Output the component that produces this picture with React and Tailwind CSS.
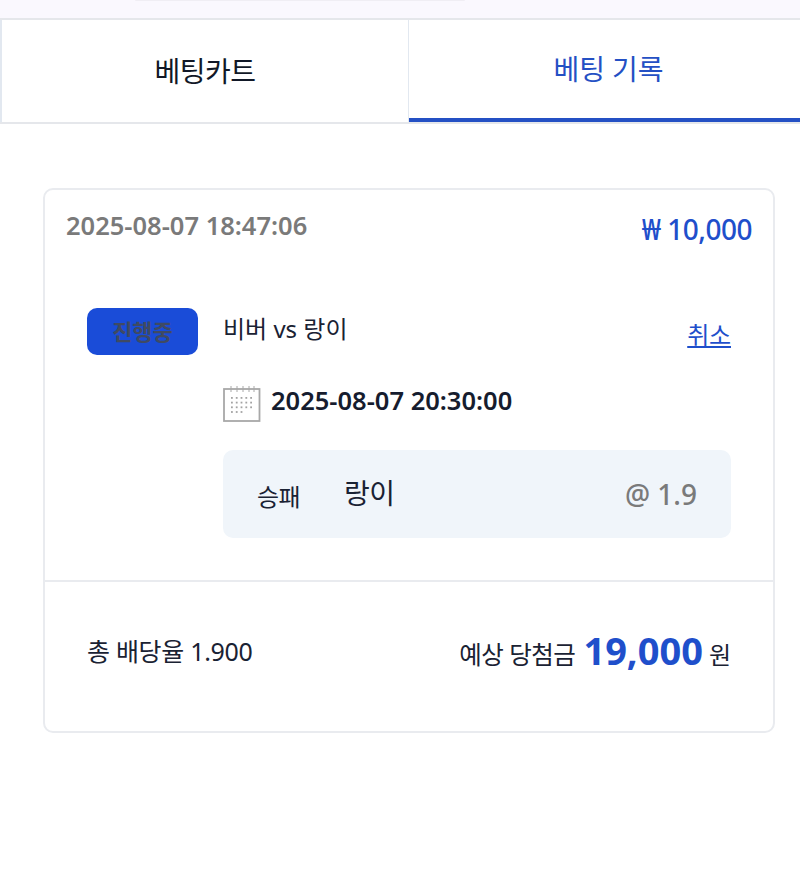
import React from 'react';

const font = { fontFamily: '"Noto Sans", "Noto Sans CJK KR", sans-serif' };

function CalendarIcon() {
  const dots = [];
  for (let r = 0; r < 4; r++) {
    for (let c = 0; c < 5; c++) {
      if (r === 3 && c > 2) continue;
      dots.push(<rect key={`${r}-${c}`} x={8 + c * 4.8} y={13 + r * 4.7} width="1.8" height="1.8" fill="#a3a3a3" />);
    }
  }
  return (
    <svg width="38" height="38" viewBox="0 0 38 38" fill="none" className="shrink-0 mt-[5px]">
      <rect x="1" y="5" width="35.5" height="32" stroke="#a8a8a8" strokeWidth="1.8" />
      <path d="M8 2V8M14 2V8M20 2V8M26 2V8M31 2V8" stroke="#a8a8a8" strokeWidth="1" />
      {dots}
    </svg>
  );
}

export default function App() {
  return (
    <div style={font} className="w-[800px] h-[887px] bg-white overflow-hidden text-[#111827]">
      <div className="h-[18px] bg-[#faf8fe] flex justify-center">
        <div className="w-[330px] h-[1px] ml-[-200px] bg-[#f0eef4] rounded-b" />
      </div>

      <div className="flex h-[106px] border-t-2 border-b-2 border-[#e5e7eb]">
        <button className="w-[409px] border-l-2 border-r border-[#e2e8f0] text-[28px] tracking-[-0.5px] text-[#111827]">베팅카트</button>
        <button className="flex-1 pl-[8px] border-b-[4px] border-[#2450c4] text-[28px] tracking-[-0.1px] text-[#2450c4]">베팅 기록</button>
      </div>

      <div className="ml-[43px] mr-[25px] mt-[64px] h-[545px] border-2 border-[#e9ebef] rounded-[10px] flex flex-col">
        <div className="flex justify-between items-start pl-[21px] pr-[21px] pt-[18px]">
          <span className="text-[25.5px] leading-[34px] font-semibold text-[#7a7a7a]">2025-08-07 18:47:06</span>
          <span className="text-[28px] leading-[42px] font-medium text-[#1f4fcb] tracking-[-0.5px]">₩ 10,000</span>
        </div>

        <div className="flex pl-[42px] pr-[42px] mt-[58px]">
          <div className="w-[111px] h-[47px] rounded-[10px] bg-[#1a4cd8] flex items-center justify-center text-[22px] font-bold text-[#3f4a63] shrink-0">진행중</div>
          <div className="ml-[25px] flex-1 min-w-0">
            <div className="flex justify-between">
              <span className="text-[24px] leading-[42px] text-[#1a2233]">비버 vs 랑이</span>
              <a className="text-[24px] leading-[42px] mt-[6px] underline text-[#1f4fcb] tracking-[-0.2px]">취소</a>
            </div>
            <div className="flex items-center gap-[10px] mt-[25px] h-[38px]">
              <CalendarIcon />
              <span className="text-[25.5px] font-semibold text-[#161c2e]">2025-08-07 20:30:00</span>
            </div>
            <div className="mt-[31px] h-[88px] rounded-[10px] bg-[#f0f5fa] flex items-center pl-[34px] pr-[34px]">
              <span className="text-[24px] mt-[5px] w-[87px] tracking-[-0.5px] text-[#1a2233]">승패</span>
              <span className="text-[28px] mt-[-2px] tracking-[-0.5px] text-[#1a2233]">랑이</span>
              <span className="ml-auto text-[28px] font-medium text-[#7a7a7a]">@ 1.9</span>
            </div>
          </div>
        </div>

        <div className="mt-[42px] border-t-2 border-[#e9ebef] flex-1 flex items-center justify-between pl-[42px] pr-[42px] pb-[9px]">
          <span className="text-[25px] tracking-[-0.3px] text-[#1a2233]">총 배당율 1.900</span>
          <div className="flex items-center">
            <span className="text-[24.5px] mt-[6px] tracking-[-0.5px] text-[#1a2233]">예상 당첨금</span>
            <span className="text-[38px] mt-[-4px] font-bold text-[#1f4fcb] ml-[8px] mr-[6px]">19,000</span>
            <span className="text-[24px] mt-[6px] text-[#1a2233]">원</span>
          </div>
        </div>
      </div>
    </div>
  );
}
